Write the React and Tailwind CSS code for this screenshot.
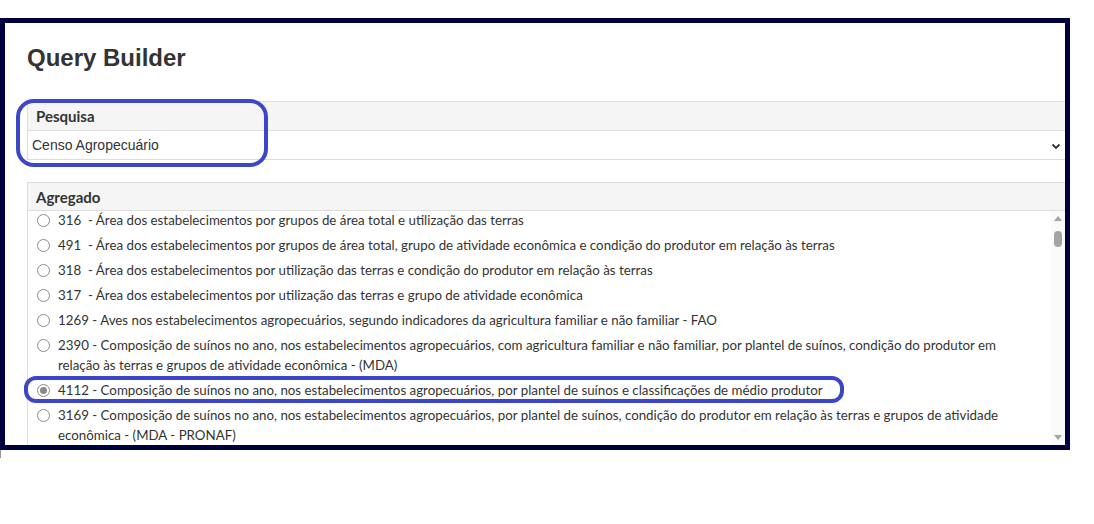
import React from 'react';

const agregados = [
  { id: '316', pad: true, texto: 'Área dos estabelecimentos por grupos de área total e utilização das terras' },
  { id: '491', pad: true, texto: 'Área dos estabelecimentos por grupos de área total, grupo de atividade econômica e condição do produtor em relação às terras' },
  { id: '318', pad: true, texto: 'Área dos estabelecimentos por utilização das terras e condição do produtor em relação às terras' },
  { id: '317', pad: true, texto: 'Área dos estabelecimentos por utilização das terras e grupo de atividade econômica' },
  { id: '1269', texto: 'Aves nos estabelecimentos agropecuários, segundo indicadores da agricultura familiar e não familiar - FAO' },
  { id: '2390', texto: 'Composição de suínos no ano, nos estabelecimentos agropecuários, com agricultura familiar e não familiar, por plantel de suínos, condição do produtor em relação às terras e grupos de atividade econômica - (MDA)' },
  { id: '4112', checked: true, texto: 'Composição de suínos no ano, nos estabelecimentos agropecuários, por plantel de suínos e classificações de médio produtor' },
  { id: '3169', texto: 'Composição de suínos no ano, nos estabelecimentos agropecuários, por plantel de suínos, condição do produtor em relação às terras e grupos de atividade econômica - (MDA - PRONAF)' },
];

const Radio = ({ checked }) => (
  <span className="mt-[4px] flex h-[13px] w-[13px] shrink-0 items-center justify-center rounded-full border border-[#8a8a8a] bg-white">
    {checked && <span className="h-[7px] w-[7px] rounded-full bg-[#8a8a8a]" />}
  </span>
);

const App = () => {
  return (
    <div className="relative h-[524px] w-[1094px] overflow-hidden bg-white font-['Lato',sans-serif] text-[#333]">
      <div className="mt-[18px] h-[432px] w-[1070px] overflow-hidden border-[5px] border-[#00003f] bg-white">
        <div className="pl-[22px] pt-[21px]">
          <h1 className="font-['Liberation_Sans',Arial,sans-serif] text-[24px] font-bold leading-[28px] text-[#333]">Query Builder</h1>

          <div className="mt-[29px] border-y border-l border-[#ddd]">
            <div className="flex h-[29px] items-center border-b border-[#ddd] bg-[#f5f5f5] pl-[8px] text-[15px] font-bold text-[#333]">Pesquisa</div>
            <div className="flex h-[28px] items-center justify-between pl-[4px] pr-[4px] pt-[1px] font-['Liberation_Sans',Arial,sans-serif] text-[14px] text-[#333]">
              <span>Censo Agropecuário</span>
              <svg width="10" height="10" viewBox="0 0 10 10" className="text-[#333]">
                <path d="M1.5 3.5 L5 7 L8.5 3.5" fill="none" stroke="currentColor" strokeWidth="1.8" />
              </svg>
            </div>
          </div>

          <div className="mt-[22px] border-t border-l border-[#ddd]">
            <div className="flex h-[28px] items-center border-b border-[#ddd] bg-[#f5f5f5] pl-[8px] pt-[2px] text-[15px] font-bold text-[#333]">Agregado</div>
            <div className="flex h-[240px]">
              <ul className="-mt-[1px] flex-1 pl-[9px] pr-[30px] text-[13.3px] leading-[20px] text-[#333]">
                {agregados.map((item) => (
                  <li key={item.id} className="mb-[5px] flex gap-[8px]">
                    <Radio checked={item.checked} />
                    <span>
                      {item.id}{item.pad ? '\u00a0' : ''} - {item.texto}
                    </span>
                  </li>
                ))}
              </ul>
              <div className="flex w-[14px] flex-col items-center bg-[#fafafa] pt-[5px]">
                <svg width="8" height="5" viewBox="0 0 8 5"><path d="M0 5 L4 0 L8 5 Z" fill="#a3a3a3" /></svg>
                <div className="mt-[10px] h-[16px] w-[8px] rounded-full bg-[#a3a3a3]" />
                <div className="mt-auto mb-[11px]">
                  <svg width="8" height="5" viewBox="0 0 8 5"><path d="M0 0 L8 0 L4 5 Z" fill="#a3a3a3" /></svg>
                </div>
              </div>
            </div>
          </div>
        </div>
      </div>

      <div className="absolute left-0 top-[450px] h-[8px] w-px bg-[#999]" />

      <div className="absolute left-[16px] top-[99px] h-[68px] w-[252px] rounded-[18px] border-[4px] border-[#3c46c8]" />
      <div className="absolute left-[24px] top-[376px] h-[27px] w-[820px] rounded-[12px] border-[4px] border-[#3c46c8]" />
    </div>
  );
};

export default App;
